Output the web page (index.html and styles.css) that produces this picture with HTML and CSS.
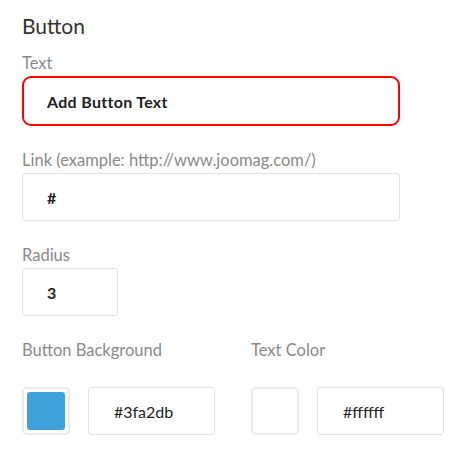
FILE: index.html
```html
<!DOCTYPE html>
<html>
<head>
<meta charset="utf-8">
<link rel="stylesheet" href="styles.css">
</head>
<body>
<div class="panel">
  <h2 class="title">Button</h2>
  <div class="field">
    <div class="label">Text</div>
    <div class="input wide active">Add Button Text</div>
  </div>
  <div class="field">
    <div class="label">Link (example: http://www.joomag.com/)</div>
    <div class="input wide bold">#</div>
  </div>
  <div class="field">
    <div class="label">Radius</div>
    <div class="input small bold">3</div>
  </div>
  <div class="colors">
    <div class="color-field">
      <div class="label">Button Background</div>
      <div class="color-row">
        <div class="swatch"><div class="swatch-fill blue"></div></div>
        <div class="input hex">#3fa2db</div>
      </div>
    </div>
    <div class="color-field">
      <div class="label">Text Color</div>
      <div class="color-row">
        <div class="swatch"><div class="swatch-fill white"></div></div>
        <div class="input hex">#ffffff</div>
      </div>
    </div>
  </div>
</div>
</body>
</html>
```
FILE: styles.css
```css
* { box-sizing: border-box; }
html, body { margin: 0; padding: 0; background: #fff; }
body { font-family: "Lato", "Open Sans", sans-serif; }
.panel {
  padding: 13px 0 0 22px;
  width: 472px;
}
.title {
  margin: 0 0 16px 0;
  font-size: 21px;
  font-weight: 400;
  color: #333;
  line-height: 25px;
}
.field { margin-bottom: 25px; }
.label {
  font-size: 16.5px;
  color: #8a8a8a;
  line-height: 18px;
  margin-bottom: 4px;
}
.input {
  height: 48px;
  border: 1px solid #e2e2e2;
  border-radius: 3px;
  padding-left: 24px;
  display: flex;
  align-items: center;
  font-size: 16px;
  color: #222;
}
.bold { font-weight: 700; }
.wide { width: 378px; }
.small { width: 96px; }
.active {
  height: 50px;
  border: 2px solid #f00;
  border-radius: 9px;
  font-weight: 700;
  padding-left: 23px;
  letter-spacing: 0.3px;
}
.colors {
  display: flex;
  margin-top: 16px;
}
.color-field { width: 229px; }
.color-field + .color-field { width: 200px; }
.colors .label { margin-bottom: 28px; }
.color-row {
  display: flex;
  gap: 18px;
}
.swatch {
  width: 48px;
  height: 48px;
  border: 2px solid #ebebeb;
  border-radius: 5px;
  padding: 3px;
}
.swatch-fill {
  width: 100%;
  height: 100%;
  border-radius: 3px;
}
.blue { background: #3fa2db; }
.white { background: #fff; }
.hex { width: 127px; padding-left: 25px; }
```
